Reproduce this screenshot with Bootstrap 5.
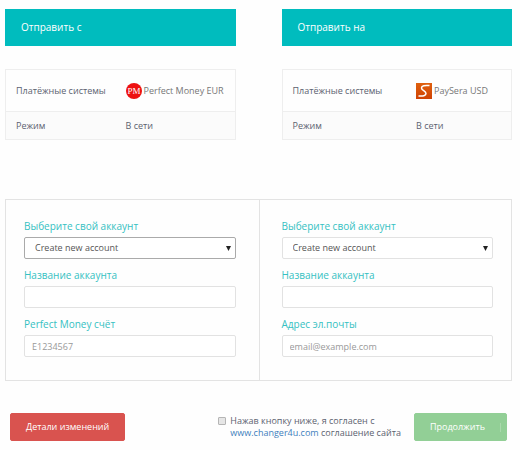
<!DOCTYPE html>
<html lang="ru">
<head>
<meta charset="utf-8">
<meta name="viewport" content="width=device-width, initial-scale=1">
<title>Обмен</title>
<link href="https://cdn.jsdelivr.net/npm/bootstrap@5.3.0/dist/css/bootstrap.min.css" rel="stylesheet">
<style>
body { font-family: "Open Sans", "Noto Sans", sans-serif; font-size: 9px; line-height: 12px; color: #5c6270; background: #fefefe; }
.page { padding: 9px 8px 8px 5px; }
.pair { display: grid; grid-template-columns: 1fr 1fr; column-gap: 46px; }
.side-title { background: #00bcbe; color: #fff; font-size: 10px; line-height: 15px; padding: 11px 16px; margin: 0 0 23px; font-weight: 400; }
.info { border: 1px solid #eee; table-layout: fixed; color: #5c6270; }
.info th, .info td { font-weight: 400; padding: 0 0 0 10px; vertical-align: middle; }
.info td { padding-left: 0; }
.info tr:first-child { height: 42px; border-bottom: 1px solid #eee; }
.info tr:last-child { height: 28px; background: #fbfbfb; }
.info .key-a { width: 120px; }
.info .key-b { width: 134px; }
.brand { color: #777; gap: 2px; }
.brand svg { flex: none; }
.accounts { border: 1px solid #e3e3e3; margin-top: 59px; display: grid; grid-template-columns: 1fr 1fr; }
.account { padding: 19px 23px 23px 18px; }
.account + .account { border-left: 1px solid #e3e3e3; padding-left: 22px; padding-right: 18px; }
.field + .field { margin-top: 9px; }
.field label { display: block; color: #35c1c2; font-size: 10px; line-height: 14px; margin-bottom: 4px; }
.field .form-control, .field .form-select { height: 22px; min-height: 0; border: 1px solid #e2e2e2; border-radius: 2px; font-size: 9px; line-height: 12px; padding: 0 7px; color: #555; background-color: #fff; }
.field .form-control::placeholder { color: #999; }
.field .form-select { padding: 0 16px 0 10px; background-image: url("data:image/svg+xml,%3Csvg xmlns='http://www.w3.org/2000/svg' viewBox='0 0 5 5'%3E%3Cpath d='M0 0h5L2.5 5z' fill='%23222'/%3E%3C/svg%3E"); background-size: 5px 5px; background-position: right 4px center; }
.field .form-select.current { border-color: #aaa; }
.actions { padding: 0 5px; margin-top: 32px; }
.action { font-size: 9px; line-height: 14px; padding: 6px 15px; border-radius: 2px; color: #fff; }
.action-details { background: #d9534f; border-color: #d9534f; }
.action-next { background: #92cf96; border-color: #92cf96; padding-right: 5px; gap: 15px; }
.action-next span { width: 1px; height: 9px; background: #a9daac; }
.agree { gap: 4px; margin-right: 13px; }
.agree input { appearance: none; width: 8px; height: 8px; margin: 2px 0 0; border: 1px solid #b5b5b5; border-radius: 1px; background: #e6e6e6; flex: none; }
.agree input:checked { background: #337ab7; }
.agree a { color: #3f7fbd; text-decoration: none; }
</style>
</head>
<body>
<main class="page container-fluid">
  <div class="pair">
    <section>
      <h2 class="side-title">Отправить с</h2>
      <table class="info w-100">
        <tr><th scope="row" class="key-a">Платёжные системы</th><td><div class="brand d-flex align-items-center">
          <svg width="16" height="16" viewBox="0 0 16 16" aria-hidden="true"><circle cx="8" cy="8" r="8" fill="#ed1111"/><text x="8" y="11" text-anchor="middle" font-family="Liberation Serif, serif" font-size="9" fill="#fff">PM</text></svg>
          <span>Perfect Money EUR</span></div></td></tr>
        <tr><th scope="row">Режим</th><td>В сети</td></tr>
      </table>
    </section>
    <section>
      <h2 class="side-title">Отправить на</h2>
      <table class="info w-100">
        <tr><th scope="row" class="key-b">Платёжные системы</th><td><div class="brand d-flex align-items-center">
          <svg width="16" height="16" viewBox="0 0 16 16" aria-hidden="true"><defs><linearGradient id="orange" x2="0" y2="1"><stop stop-color="#df600e"/><stop offset="1" stop-color="#cf4204"/></linearGradient></defs><path fill="url(#orange)" d="M0 0h16v16H0z"/><path d="M13.500 2.600C9 2.100 5.500 2.700 5.500 5c0 2.600 4.500 2.800 4.500 5.500 0 2.200-3 2.800-7.500 2.500" fill="none" stroke="#fff" stroke-width="1.500"/></svg>
          <span>PaySera USD</span></div></td></tr>
        <tr><th scope="row">Режим</th><td>В сети</td></tr>
      </table>
    </section>
  </div>

  <form>
    <div class="accounts">
      <div class="account">
        <div class="field"><label for="from-account">Выберите свой аккаунт</label>
          <select class="form-select current" id="from-account"><option>Create new account</option></select></div>
        <div class="field"><label for="from-name">Название аккаунта</label>
          <input class="form-control" id="from-name" type="text"></div>
        <div class="field"><label for="from-number">Perfect Money счёт</label>
          <input class="form-control" id="from-number" type="text" placeholder="E1234567"></div>
      </div>
      <div class="account">
        <div class="field"><label for="to-account">Выберите свой аккаунт</label>
          <select class="form-select" id="to-account"><option>Create new account</option></select></div>
        <div class="field"><label for="to-name">Название аккаунта</label>
          <input class="form-control" id="to-name" type="text"></div>
        <div class="field"><label for="to-email">Адрес эл.почты</label>
          <input class="form-control" id="to-email" type="email" placeholder="email@example.com"></div>
      </div>
    </div>
    <div class="actions d-flex align-items-center">
      <button type="button" class="btn action action-details">Детали изменений</button>
      <div class="agree d-flex align-items-start ms-auto">
        <input type="checkbox" id="agree">
        <div><label for="agree">Нажав кнопку ниже, я согласен с</label><br><a href="#">www.changer4u.com</a> соглашение сайта</div>
      </div>
      <button type="submit" class="btn action action-next d-flex align-items-center">Продолжить<span></span></button>
    </div>
  </form>
</main>
<script src="https://cdn.jsdelivr.net/npm/bootstrap@5.3.0/dist/js/bootstrap.bundle.min.js"></script>
</body>
</html>
